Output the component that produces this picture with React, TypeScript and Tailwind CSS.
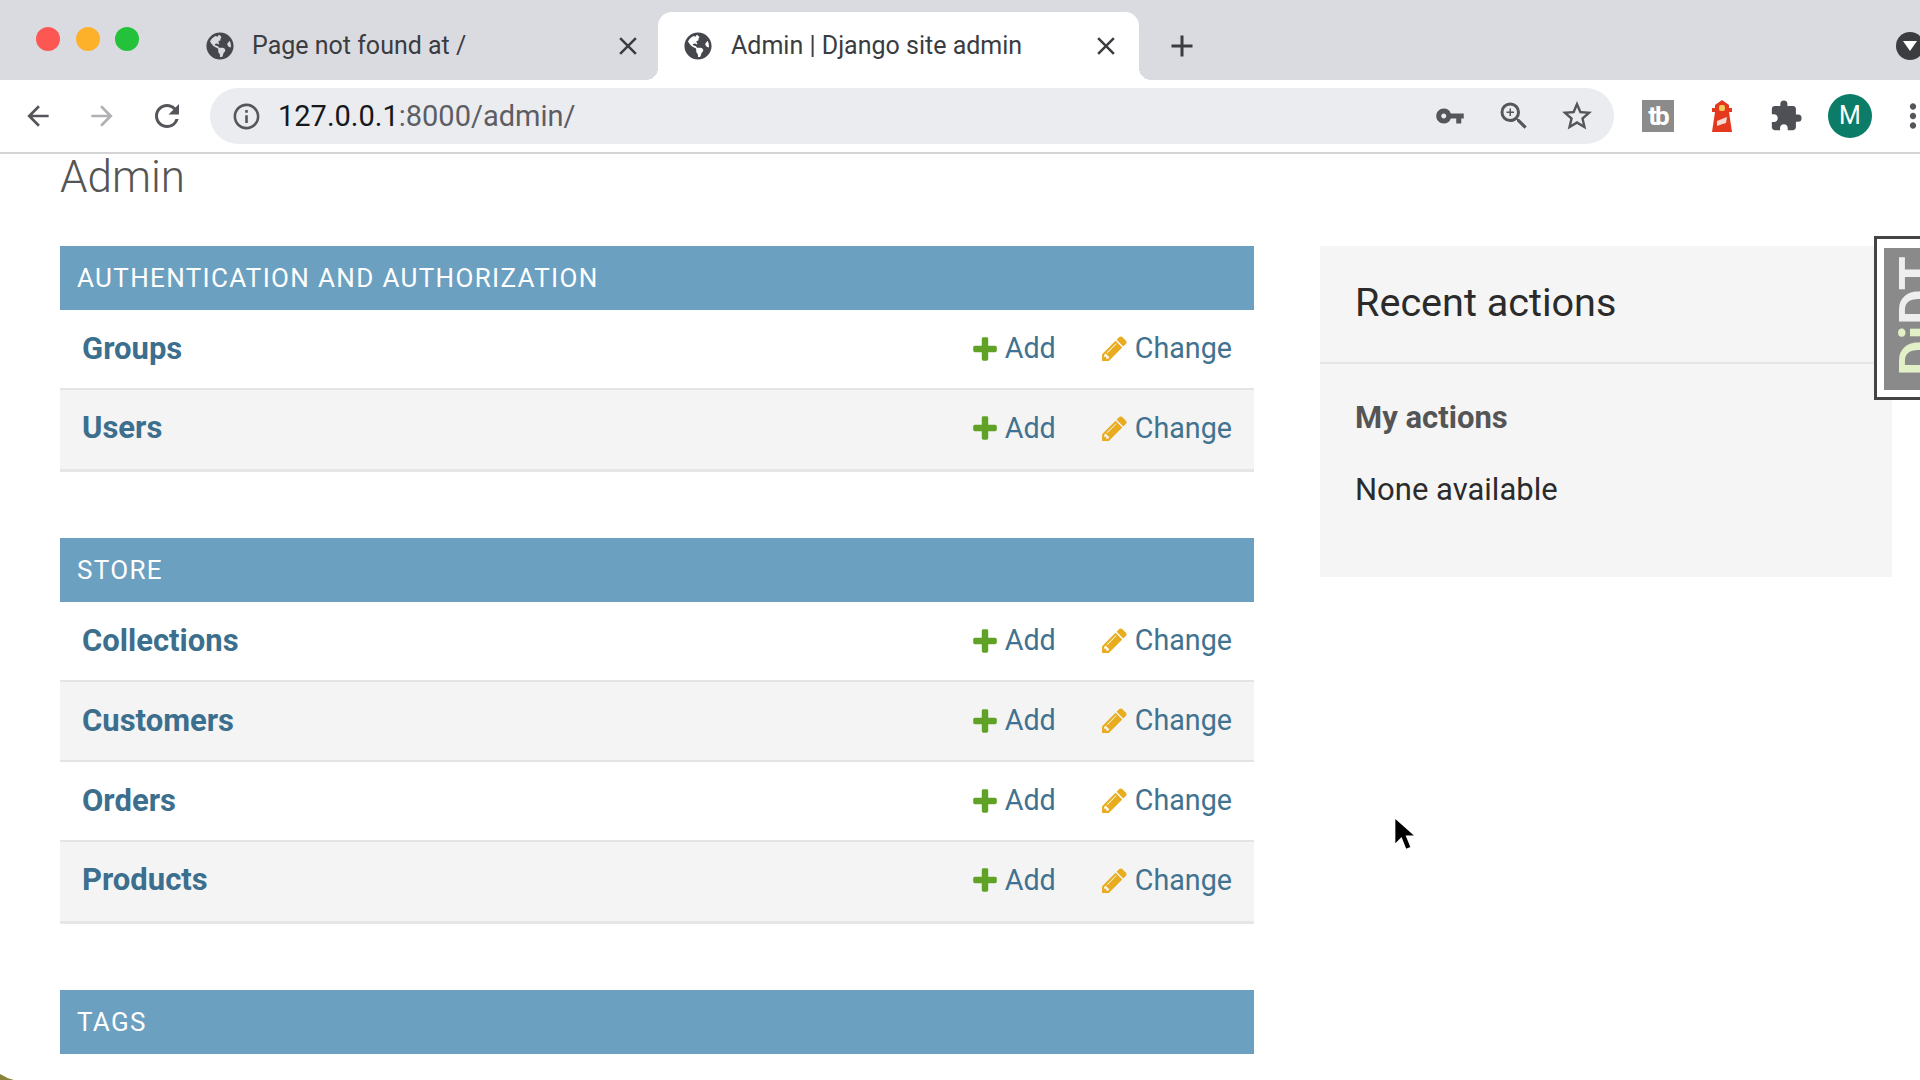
import React from "react";
import { FaGlobeAmericas } from "react-icons/fa";
import { MdArrowBack, MdArrowForward, MdRefresh, MdClose, MdAdd, MdInfoOutline, MdVpnKey, MdStarBorder, MdExtension, MdMoreVert, MdZoomIn } from "react-icons/md";

const sections = [
  { title: "Authentication and Authorization", rows: ["Groups", "Users"], actions: true },
  { title: "Store", rows: ["Collections", "Customers", "Orders", "Products"], actions: true },
  // only the top of this row shows above the fold
  { title: "Tags", rows: ["Tags"], actions: false },
];

const Tab = ({ title, active }: { title: string; active?: boolean }) => (
  <div
    className={`relative flex h-[68px] items-center rounded-t-[14px] pl-[26px] ${active ? "w-[481px] bg-white pr-[18px]" : "w-[478px] pr-[15px]"}`}
  >
    {active && (
      <>
        <span className="absolute bottom-0 left-[-12px] h-3 w-3 bg-[radial-gradient(circle_at_0_0,transparent_12px,white_12px)]" />
        <span className="absolute bottom-0 right-[-12px] h-3 w-3 bg-[radial-gradient(circle_at_100%_0,transparent_12px,white_12px)]" />
      </>
    )}
    <FaGlobeAmericas className="shrink-0 text-[28px] text-[#45474c]" />
    <span className={`text-[25px] text-[#3b3c40] ${active ? "ml-[19px]" : "ml-[18px]"}`}>{title}</span>
    <MdClose className="ml-auto text-[30px] text-[#3b3c40]" />
  </div>
);

const PlusIcon = () => (
  <svg viewBox="0 0 1792 1792" className="h-[30px] w-[30px] fill-[#5fa225]">
    <path d="M1600 796v192q0 40-28 68t-68 28h-416v416q0 40-28 68t-68 28h-192q-40 0-68-28t-28-68v-416h-416q-40 0-68-28t-28-68v-192q0-40 28-68t68-28h416v-416q0-40 28-68t68-28h192q40 0 68 28t28 68v416h416q40 0 68 28t28 68z" />
  </svg>
);

const PencilIcon = () => (
  <svg viewBox="0 0 1792 1792" className="h-[29px] w-[29px] fill-[#e8ac1e]">
    <path d="M491 1536l91-91-235-235-91 91v107h128v128h107zm523-928q0-22-22-22-10 0-17 7l-542 542q-7 7-7 17 0 22 22 22 10 0 17-7l542-542q7-7 7-17zm-54-192l416 416-832 832h-416v-416zm683 96q0 53-37 90l-166 166-416-416 166-165q36-38 90-38 53 0 91 38l235 234q37 39 37 91z" />
  </svg>
);

const Row = ({ name, alt, last, actions }: { name: string; alt: boolean; last: boolean; actions: boolean }) => (
  <div
    className={`flex items-center pl-[22px] pr-[22px] ${alt ? "bg-[#f4f4f5]" : "bg-white"} ${last ? "h-[82px] border-b-[3px] border-[#e6e6e6] pb-[2px]" : "h-[80px] border-b-2 border-[#e4e4e4]"}`}
  >
    <span className="text-[31px] font-bold text-[#3c6f8d]">{name}</span>
    {actions && (
      <div className="ml-auto flex items-center text-[28.7px] text-[#41728f]">
        <PlusIcon />
        <span className="ml-[5px]">Add</span>
        <span className="ml-[44px]"><PencilIcon /></span>
        <span className="ml-[6px]">Change</span>
      </div>
    )}
  </div>
);

const Lighthouse = () => (
  <svg viewBox="0 0 24 32" className="h-[32px] w-[24px]">
    <path d="M12 0l7 5v3h3v4h-3l3 20H2l3-20H2V8h3V5z" fill="#e5391f" />
    <rect x="9" y="5" width="6" height="6" rx="2" fill="#eecb5c" />
    <path d="M7 26v-5q5-2 10-4l-1 6q-4 1-9 3z" fill="#f4dcd0" />
  </svg>
);

export default function App() {
  return (
    <div className="relative flex h-screen flex-col overflow-hidden bg-white font-['Roboto',sans-serif]">
      {/* tab strip */}
      <div className="flex h-[80px] shrink-0 items-end bg-[#dadbe0]">
        <div className="flex h-full w-[180px] shrink-0 items-center gap-[15.5px] pb-[2px] pl-[36px]">
          <span className="h-6 w-6 rounded-full bg-[#fc5753]" />
          <span className="h-6 w-6 rounded-full bg-[#fdb12a]" />
          <span className="h-6 w-6 rounded-full bg-[#24c13b]" />
        </div>
        <Tab title="Page not found at /" />
        <Tab title="Admin | Django site admin" active />
        <div className="flex h-[68px] flex-1 items-center">
          <MdAdd className="ml-[25px] text-[36px] text-[#3b3c40]" />
          <span className="ml-auto mr-[-4px] flex h-7 w-7 items-center justify-center rounded-full bg-[#3b3c40]">
            <span className="h-0 w-0 border-x-[7px] border-t-[10px] border-x-transparent border-t-white" />
          </span>
        </div>
      </div>

      {/* toolbar */}
      <div className="flex h-[74px] shrink-0 items-center border-b-2 border-[#d4d4d4] bg-white pl-[22px]">
        <MdArrowBack className="shrink-0 text-[32px] text-[#55565b]" />
        <MdArrowForward className="ml-[32px] shrink-0 text-[32px] text-[#b0b1b5]" />
        <MdRefresh className="ml-[31px] shrink-0 text-[36px] text-[#55565b]" />
        <div className="ml-[25px] flex h-[56px] w-[1404px] shrink-0 items-center rounded-full bg-[#ebecf0] pl-[21px] pr-[19px]">
          <MdInfoOutline className="text-[31px] text-[#55565b]" />
          <span className="ml-[16px] mt-[2px] text-[29px] text-[#17181a]">
            127.0.0.1<span className="text-[#5d5e63]">:8000/admin/</span>
          </span>
          <MdVpnKey className="ml-auto text-[30px] text-[#55565b]" />
          <MdZoomIn className="ml-[31px] text-[36px] text-[#55565b]" />
          <MdStarBorder className="ml-[27px] text-[36px] text-[#55565b]" />
        </div>
        <div className="ml-[28px] flex h-[32px] w-[32px] shrink-0 items-center justify-center bg-[#8b8b8b] text-[26px] font-bold tracking-[-2px] text-white">
          tb
        </div>
        <div className="ml-[26px] flex w-[44px] shrink-0 justify-center">
          <Lighthouse />
        </div>
        <MdExtension className="ml-[25px] shrink-0 text-[34px] text-[#4f5055]" />
        <div className="ml-[25px] flex h-[44px] w-[44px] shrink-0 items-center justify-center rounded-full bg-[#0a7c68] text-[25px] text-white">
          M
        </div>
        <MdMoreVert className="ml-[22px] shrink-0 text-[38px] text-[#55565b]" />
      </div>

      {/* page */}
      <div className="flex-1 px-[60px]">
        <h1 className="mt-[-2px] text-[44px] leading-[50px] font-light text-[#555]">Admin</h1>
        <div className="mt-[44px] flex items-start">
          <div className="w-[1194px] shrink-0">
            {sections.map((section) => (
              <div key={section.title} className="mb-[66px]">
                <div className="flex h-[64px] items-center bg-[#6ca0c0] pl-[17px] pt-[1px] text-[26px] tracking-[1.34px] text-white uppercase">
                  {section.title}
                </div>
                {section.rows.map((name, i) => (
                  <Row
                    key={name}
                    name={name}
                    alt={i % 2 === 1}
                    last={i === section.rows.length - 1}
                    actions={section.actions}
                  />
                ))}
              </div>
            ))}
          </div>
          <div className="ml-[66px] h-[331px] w-[572px] shrink-0 bg-[#f5f5f5]">
            <div className="flex h-[118px] items-center border-b-2 border-[#e6e6e6] pb-[2px] pl-[35px] text-[39.6px] text-[#2b2b2b]">
              Recent actions
            </div>
            <div className="pl-[35px]">
              <div className="mt-[31px] text-[31px] font-bold text-[#555]">My actions</div>
              <div className="mt-[25px] text-[31px] text-[#2b2b2b]">None available</div>
            </div>
          </div>
        </div>
      </div>

      {/* debug toolbar handle */}
      <div className="absolute right-0 top-[236px] h-[164px] w-[46px] border-[3px] border-r-0 border-[#444] bg-white pb-[7px] pl-[7px] pt-[9px]">
        <div className="flex h-full items-center overflow-hidden bg-[#8a8a8a] pb-[6px] pl-[8px]">
          <span className="rotate-180 text-[56px] leading-none font-semibold text-[#eeeeee] [writing-mode:vertical-rl]">
            <span className="text-[#e2f0c8]">Dj</span>DT
          </span>
        </div>
      </div>

      {/* mouse pointer */}
      <svg viewBox="0 0 20 32" className="absolute left-[1392px] top-[816px] h-[36px] w-[23px]">
        <path d="M2 1v25l6-6 4 10 5-2-4-10h8z" fill="#000" stroke="#fff" strokeWidth="1.5" />
      </svg>

      {/* desktop corner */}
      <svg viewBox="0 0 14 6" className="absolute bottom-0 left-0 h-[6px] w-[14px]">
        <path d="M0 0q6 4 14 6H0z" fill="#8a8436" />
      </svg>
    </div>
  );
}
